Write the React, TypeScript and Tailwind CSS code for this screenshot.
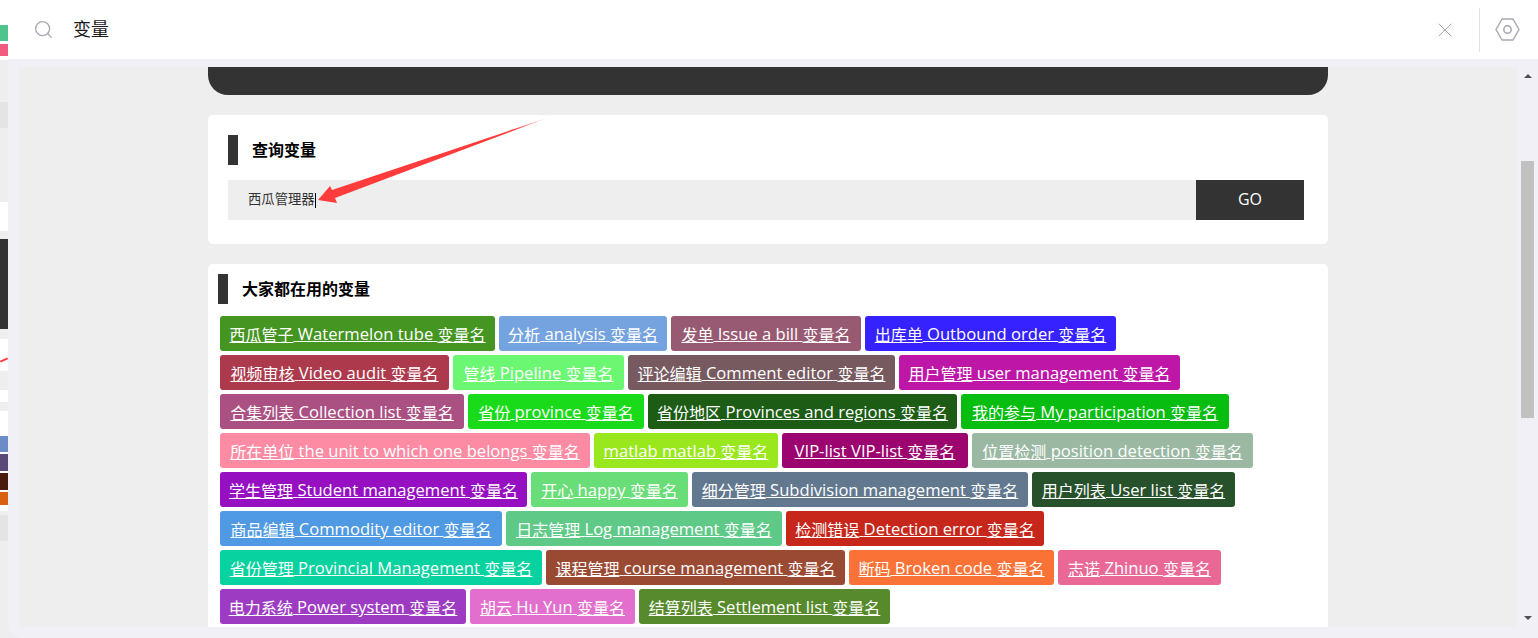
import { Search, X } from "lucide-react";

const rows: [string, string, string, number][][] = [
  [["西瓜管子", "Watermelon tube", "#459522", 275], ["分析", "analysis", "#75a3e0", 168], ["发单", "Issue a bill", "#985a73", 190], ["出库单", "Outbound order", "#3522ff", 251]],
  [["视频审核", "Video audit", "#ad3a4c", 229], ["管线", "Pipeline", "#6bf772", 171], ["评论编辑", "Comment editor", "#775a60", 267], ["用户管理", "user management", "#be17a8", 281]],
  [["合集列表", "Collection list", "#ab5083", 244], ["省份", "province", "#1adb1a", 176], ["省份地区", "Provinces and regions", "#1c5c14", 309], ["我的参与", "My participation", "#07bd10", 268]],
  [["所在单位", "the unit to which one belongs", "#fc8ba3", 370], ["matlab", "matlab", "#99e81e", 184], ["VIP-list", "VIP-list", "#9c0570", 186], ["位置检测", "position detection", "#9ab8a2", 281]],
  [["学生管理", "Student management", "#9610c2", 307], ["开心", "happy", "#69dd77", 157], ["细分管理", "Subdivision management", "#62788f", 336], ["用户列表", "User list", "#27512b", 203]],
  [["商品编辑", "Commodity editor", "#4f9ae2", 282], ["日志管理", "Log management", "#5fca88", 276], ["检测错误", "Detection error", "#c7271a", 258]],
  [["省份管理", "Provincial Management", "#08d2a0", 322], ["课程管理", "course management", "#9a4a33", 299], ["断码", "Broken code", "#fb7236", 205], ["志诺", "Zhinuo", "#e96896", 163]],
  [["电力系统", "Power system", "#9d3cc2", 246], ["胡云", "Hu Yun", "#e26fcd", 165], ["结算列表", "Settlement list", "#568a2c", 251]],
];

const font = "font-['Open_Sans','Noto_Sans_CJK_SC',sans-serif]";

function Strip() {
  return (
    <div className="w-[20px] h-[638px] shrink-0 flex flex-col bg-[#eeeeee] overflow-hidden">
      <div className="h-[60px] shrink-0 bg-white flex flex-col pt-[25px] gap-[3px]">
        <div className="h-[16px] bg-[#4fc58d]" />
        <div className="h-[12px] bg-[#f25c7e]" />
      </div>
      <div className="h-[26px] shrink-0 mt-[42px] bg-[#e4e4e4]" />
      <div className="h-[29px] shrink-0 mt-[74px] bg-white" />
      <div className="h-[90px] shrink-0 mt-[8px] bg-[#333333]" />
      <div className="h-[32px] shrink-0 mt-[10px] bg-white relative">
        <div className="absolute left-0 top-[20px] w-[8px] h-[2px] bg-[#ff3b3b] -rotate-[25deg]" />
      </div>
      <div className="h-[12px] shrink-0 mt-[19px] bg-white" />
      <div className="h-[100px] shrink-0 mt-[9px] bg-white flex flex-col gap-[2px] pt-[25px]">
        <div className="h-[16px] bg-[#6c8bc9]" />
        <div className="h-[17px] bg-[#5a4a78]" />
        <div className="h-[17px] bg-[#4a1a0c]" />
        <div className="h-[13px] bg-[#d9620f]" />
      </div>
      <div className="h-[26px] shrink-0 mt-[4px] bg-[#e4e4e4]" />
    </div>
  );
}

function Heading({ text }: { text: string }) {
  return (
    <div className="flex items-center h-[30px]">
      <div className="w-[10px] h-[30px] bg-[#333333] mr-[14px]" />
      <span className="text-[16px] font-bold text-black">{text}</span>
    </div>
  );
}

export default function App() {
  return (
    <div className={`flex w-[1538px] h-[638px] overflow-hidden bg-white ${font}`}>
      <Strip />
      <div className="relative -ml-[12px] flex-1 flex flex-col bg-[#f0f0f6] rounded-l-[14px] overflow-hidden">
        <header className="h-[59px] shrink-0 bg-white flex items-center">
          <Search className="ml-[25px] w-[21px] h-[21px] text-[#a8a8b5]" strokeWidth={1.5} />
          <span className="ml-[19px] text-[18px] text-[#1a1a1a]">变量</span>
          <X className="ml-auto w-[24px] h-[24px] text-[#a8a8b5]" strokeWidth={1} />
          <div className="ml-[22px] w-px h-[44px] bg-[#e2e2e6]" />
          <svg className="ml-[15px] mr-[18px] w-[25px] h-[23px]" viewBox="0 0 25 23" fill="none" stroke="#a8a8b5" strokeWidth="1.5">
            <path d="M7 1h11l6 10.5L18 22H7L1 11.5z" strokeLinejoin="round" />
            <circle cx="12.5" cy="11.5" r="3.7" />
          </svg>
        </header>
        <div className="flex flex-1 mt-[8px] mb-[11px] ml-[11px] min-h-0">
          <main className="flex-1 bg-[#eeeeee] overflow-hidden pl-[189px]">
            <div className="w-[1120px] h-[28px] bg-[#333333] rounded-b-[20px]" />
            <section className="relative w-[1120px] h-[129px] mt-[20px] bg-white rounded-[5px] pt-[20px] pl-[20px]">
              <Heading text="查询变量" />
              <div className="flex mt-[15px] w-[1076px] h-[40px]">
                <div className="flex-1 bg-[#eeeeee] flex items-center pl-[20px] text-[13.33px] text-[#333333]">
                  西瓜管理器<span className="w-px h-[15px] bg-black" />
                </div>
                <div className="w-[108px] bg-[#333333] text-white text-[16px] pb-[2px] flex items-center justify-center">GO</div>
              </div>
              <svg className="absolute left-[100px] top-0 w-[250px] h-[100px]" viewBox="0 0 250 100">
                <defs>
                  <linearGradient id="arrowFade" x1="0" y1="0" x2="1" y2="0">
                    <stop offset="0.85" stopColor="#ff3b3b" />
                    <stop offset="1" stopColor="#ff3b3b" stopOpacity="0.3" />
                  </linearGradient>
                </defs>
                <polygon points="10,85 22,71 24,75 239,3 27,83 29,88" fill="url(#arrowFade)" />
              </svg>
            </section>
            <section className="w-[1120px] h-[400px] mt-[20px] bg-white rounded-t-[5px] pt-[10px] pl-[10px]">
              <Heading text="大家都在用的变量" />
              <div className="flex flex-col gap-[4px] mt-[12px] ml-[2px]">
                {rows.map((row, i) => (
                  <div key={i} className="flex gap-[4px]">
                    {row.map(([head, latin, color, width]) => (
                      <a key={head + latin} href="#" style={{ backgroundColor: color, width }} className="h-[35px] pt-[2px] rounded-[3px] flex items-center justify-center text-[16px] text-white underline whitespace-pre">
                        <span className={/^[A-Za-z]/.test(head) ? "text-[16.6px]" : ""}>{head}</span>
                        <span className="text-[16.6px]"> {latin} </span>
                        <span>变量名</span>
                      </a>
                    ))}
                  </div>
                ))}
              </div>
            </section>
          </main>
          <div className="w-[21px] shrink-0 flex flex-col items-center">
            <div className="mt-[7px] w-0 h-0 border-x-[4px] border-x-transparent border-b-[4px] border-b-[#505050]" />
            <div className="mt-[83px] w-[13px] h-[257px] bg-[#c1c1c1]" />
            <div className="mt-auto mb-[7px] w-0 h-0 border-x-[4px] border-x-transparent border-t-[4px] border-t-[#505050]" />
          </div>
        </div>
      </div>
    </div>
  );
}
